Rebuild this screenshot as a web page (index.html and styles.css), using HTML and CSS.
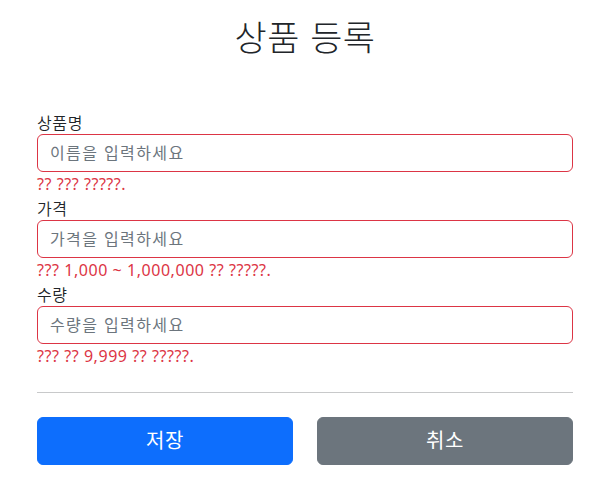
FILE: index.html
```html
<!DOCTYPE html>
<html lang="ko">
<head>
<meta charset="utf-8">
<title>상품 등록</title>
<link rel="stylesheet" href="styles.css">
</head>
<body>
<div class="container">
  <div class="title-wrap">
    <h2 class="title">상품 등록</h2>
  </div>
  <form class="form">
    <div class="field">
      <label class="label" for="itemName">상품명</label>
      <input type="text" id="itemName" class="form-control field-error" placeholder="이름을 입력하세요">
      <div class="error-text">?? ??? ?????.</div>
    </div>
    <div class="field">
      <label class="label" for="price">가격</label>
      <input type="text" id="price" class="form-control field-error" placeholder="가격을 입력하세요">
      <div class="error-text">??? 1,000 ~ 1,000,000 ?? ?????.</div>
    </div>
    <div class="field">
      <label class="label" for="quantity">수량</label>
      <input type="text" id="quantity" class="form-control field-error" placeholder="수량을 입력하세요">
      <div class="error-text">??? ?? 9,999 ?? ?????.</div>
    </div>
    <hr class="divider">
    <div class="row">
      <div class="col"><button type="button" class="btn btn-primary">저장</button></div>
      <div class="col"><button type="button" class="btn btn-secondary">취소</button></div>
    </div>
  </form>
</div>
</body>
</html>
```
FILE: styles.css
```css
* { box-sizing: border-box; }
html, body { margin: 0; padding: 0; background: #fff; }
body {
  font-family: "Noto Sans", "Noto Sans CJK KR", sans-serif;
  font-size: 16px;
  line-height: 1.5;
  color: #212529;
}
.container {
  max-width: 560px;
  margin: 0 auto;
  padding: 0 12px;
}
.title-wrap {
  text-align: center;
  padding-top: 15px;
  padding-bottom: 53px;
}
.title {
  margin: 0;
  font-size: 35px;
  font-weight: 300;
  line-height: 42px;
  font-family: "Noto Sans CJK KR", sans-serif;
  letter-spacing: 0.5px;
}
.form { display: flex; flex-direction: column; }
.field { display: flex; flex-direction: column; }
.label {
  display: block;
  height: 24px;
  line-height: 24px;
  letter-spacing: 0.6px;
  font-family: "Noto Sans CJK KR", sans-serif;
  font-weight: 350;
}
.form-control {
  display: block;
  width: 100%;
  height: 38px;
  padding: 6px 12px;
  font-family: "Noto Sans", "Noto Sans CJK KR", sans-serif;
  font-size: 16px;
  line-height: 1.5;
  color: #212529;
  background: #fff;
  border: 1px solid #dee2e6;
  border-radius: 6px;
  outline: none;
  letter-spacing: 1.4px;
}
.form-control::placeholder { color: #6c757d; opacity: 1; }
.field-error { border-color: #dc3545; }
.error-text {
  color: #dc3545;
  height: 24px;
  line-height: 24px;
  letter-spacing: 0.55px;
}
.divider {
  margin: 24px 0;
  border: 0;
  border-top: 1px solid #c8c9ca;
  height: 0;
}
.row {
  display: grid;
  grid-template-columns: 1fr 1fr;
  column-gap: 24px;
}
.btn {
  display: block;
  width: 100%;
  height: 48px;
  border: 1px solid transparent;
  border-radius: 6px;
  font-family: "Noto Sans", "Noto Sans CJK KR", sans-serif;
  font-size: 20px;
  line-height: 1.5;
  color: #fff;
  cursor: pointer;
  letter-spacing: 0.5px;
}
.btn-primary { background: #0d6efd; border-color: #0d6efd; }
.btn-secondary { background: #6c757d; border-color: #6c757d; }
```
